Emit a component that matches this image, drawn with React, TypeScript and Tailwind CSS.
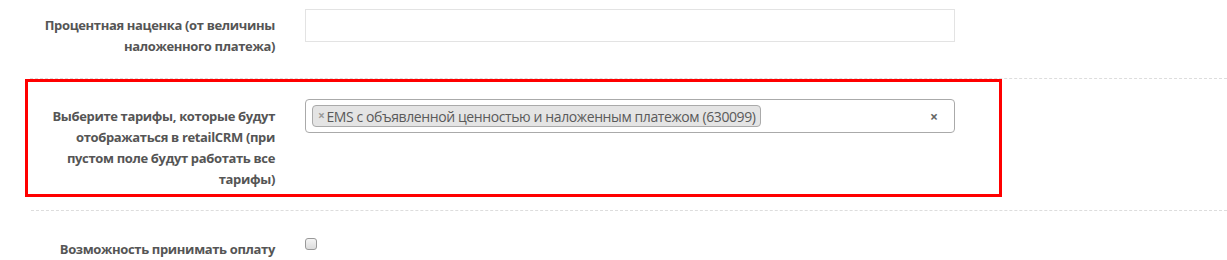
const font = { fontFamily: '"Open Sans", "Liberation Sans", sans-serif' }

function Label({ children, className = '' }: { children: React.ReactNode, className?: string }) {
  return (
    <div className={`w-[245px] shrink-0 text-right text-[13px] font-bold leading-[21px] tracking-[-0.35px] text-[#555] ${className}`}>
      {children}
    </div>
  )
}

export default function App() {
  return (
    <div className="w-[1227px] h-[260px] overflow-hidden bg-white" style={font}>
      <div className="flex h-[78px] pl-[30px]">
        <Label className="pt-[15px] pl-[12px]">
          Процентная наценка (от величины наложенного платежа)
        </Label>
        <div className="ml-[30px] mt-[9px] h-[33px] w-[650px] border border-[#e3e3e3] bg-white" />
      </div>
      <div className="ml-[30px] border-t border-dashed border-[#ddd]" />
      <div className="ml-[25px] flex h-[118px] w-[977px] border-[3px] border-[#ff0000] pl-[2px]">
        <Label className="pt-[24px] pl-[12px]">
          Выберите тарифы, которые будут отображаться в retailCRM (при пустом поле будут работать все тарифы)
        </Label>
        <div className="ml-[30px] mt-[17px] flex h-[34px] w-[650px] items-center rounded-[4px] border border-[#aaa] bg-white pl-[6px] pr-[16px]">
          <span className="flex h-[22px] items-center rounded-[4px] border border-[#aaa] bg-[#e4e4e4] pl-[5px] pr-[4px] text-[14px] tracking-[-0.4px] text-[#5a5a5a]">
            <span className="mr-[2px] text-[12px] font-bold text-[#999]">×</span>
            EMS с объявленной ценностью и наложенным платежом (630099)
          </span>
          <span className="ml-auto text-[14px] font-bold text-[#666]">×</span>
        </div>
      </div>
      <div className="ml-[31px] mt-[13px] border-t border-dashed border-[#ddd]" />
      <div className="flex pl-[30px] pt-[27px]">
        <Label className="pt-[1px]">Возможность принимать оплату</Label>
        <div className="ml-[30px] h-[12px] w-[12px] rounded-[3px] border border-[#999] bg-gradient-to-b from-[#f4f4f4] to-[#dcdcdc]" />
      </div>
    </div>
  )
}
